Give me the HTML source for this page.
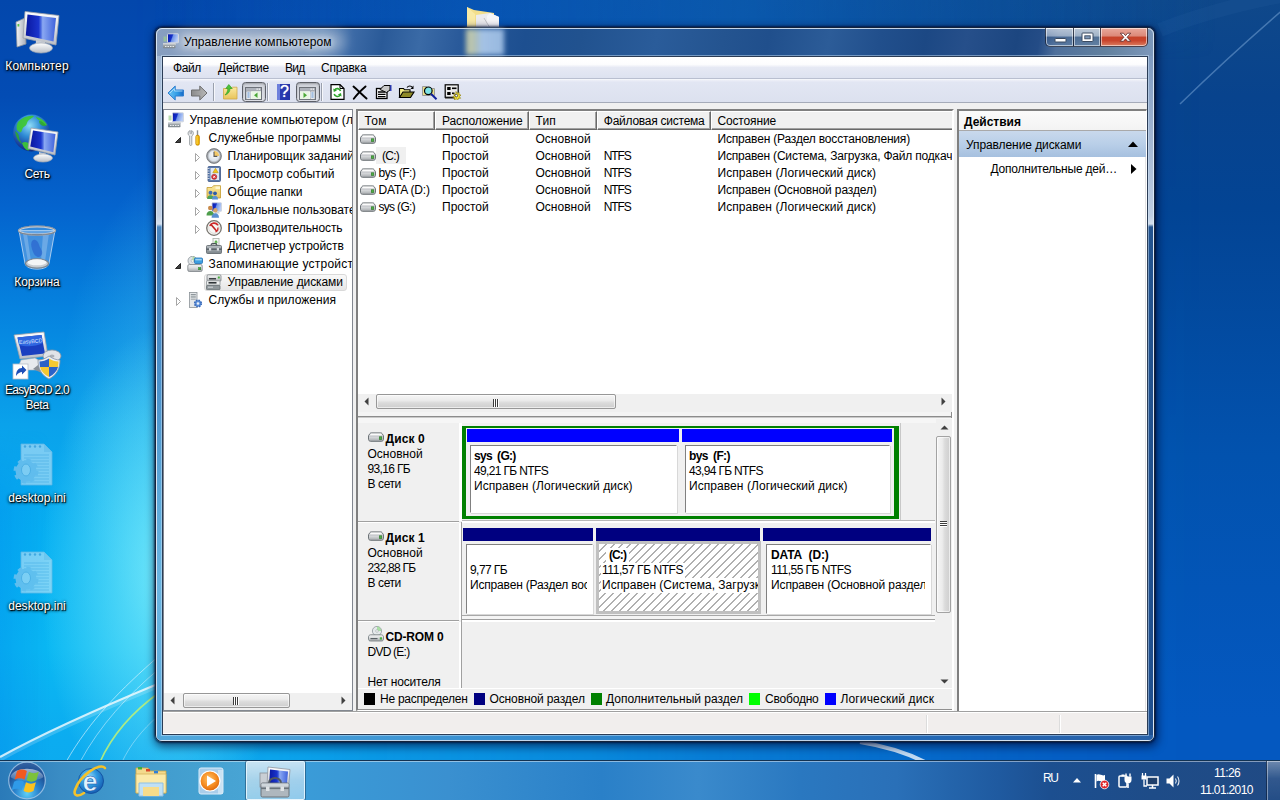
<!DOCTYPE html>
<html lang="ru">
<head>
<meta charset="utf-8">
<title>Управление компьютером</title>
<style>
*{box-sizing:border-box;margin:0;padding:0}
html,body{width:1280px;height:800px;overflow:hidden}
body{position:relative;font-family:"Liberation Sans",sans-serif;font-size:12px;color:#000;background:#0d52a8}
.a{position:absolute}
.t{position:absolute;white-space:nowrap;line-height:14px;height:14px}
#wall{left:0;top:0;width:1280px;height:800px;background:linear-gradient(180deg,rgb(15,72,138) 0%,rgb(8,67,141) 12%,rgb(3,68,148) 26%,rgb(2,82,174) 57%,rgb(4,88,192) 90%,rgb(4,88,192) 100%)}
#wl{left:0;top:0;width:1280px;height:800px;
 background:linear-gradient(180deg,rgb(3,71,172) 0%,rgb(3,76,180) 12%,rgb(4,100,206) 26%,rgb(5,131,223) 39%,rgb(10,162,235) 53%,rgb(7,176,242) 67%,rgb(10,184,243) 81%,rgb(12,172,240) 92.5%,rgb(12,170,238) 100%);
 -webkit-mask-image:linear-gradient(90deg,#000 0%,#000 10%,rgba(0,0,0,.9) 22%,rgba(0,0,0,.74) 31%,rgba(0,0,0,.67) 39%,rgba(0,0,0,.57) 47%,rgba(0,0,0,.45) 55%,rgba(0,0,0,.38) 61%,rgba(0,0,0,.29) 67%,rgba(0,0,0,.12) 78%,rgba(0,0,0,.05) 86%,transparent 94%);
 mask-image:linear-gradient(90deg,#000 0%,#000 10%,rgba(0,0,0,.9) 22%,rgba(0,0,0,.74) 31%,rgba(0,0,0,.67) 39%,rgba(0,0,0,.57) 47%,rgba(0,0,0,.45) 55%,rgba(0,0,0,.38) 61%,rgba(0,0,0,.29) 67%,rgba(0,0,0,.12) 78%,rgba(0,0,0,.05) 86%,transparent 94%)}
#wg{left:0;top:0;width:640px;height:800px;background:radial-gradient(ellipse 130px 250px at 170px 575px,rgba(120,235,250,.95) 0%,rgba(120,235,250,0) 100%),radial-gradient(ellipse 240px 300px at 300px 400px,rgba(120,235,250,.6) 0%,rgba(120,235,250,0) 100%)}
/* window */
#win{left:155px;top:27px;width:1000px;height:715px;border-radius:7px;border:1px solid #15233a;
 background:linear-gradient(100deg,#889fc0 0px,#8199bc 100px,#6a8db8 165px,#3c6aa6 195px,#2a5a98 225px,#3a6aa6 262px,#2a5a9a 300px,#1d4f90 365px,#21528f 420px,#2a5c9a 495px,#245490 560px,#204f8c 605px,#2c5c98 665px,#214f8c 715px,#1c4884 760px,#264f8a 800px,#1c4680 850px,#244c86 872px,#4f709c 890px,#62819f 940px,#7c97ba 985px,#9fb0c9 1000px);
 box-shadow:0 0 2px 1px rgba(0,8,40,.65),1px 3px 8px 2px rgba(0,10,50,.6)}
#win:before{content:"";position:absolute;left:0;top:0;right:0;bottom:0;border-radius:6px;border:1px solid rgba(235,245,255,.8)}
#fl{left:157px;top:56px;width:5px;height:679px;background:linear-gradient(180deg,#a3b8d4 0,#c3d1e5 160px,#d6e1ef 168px,#4b86c0 171px,#417fbc 200px,#4d92cb 330px,#5eaada 450px,#6ab4e0 530px,#62aede 620px,#55a6dc 679px)}
#fr{left:1148px;top:56px;width:5px;height:679px;background:linear-gradient(180deg,#7f9ac0 0,#c0cee2 160px,#d3deec 168px,#23538f 171px,#1f4f8f 100%)}
#fb{left:157px;top:735px;width:996px;height:5px;border-radius:0 0 4px 4px;background:linear-gradient(90deg,#52a8dc 0%,#3f96d4 25%,#2a80c8 50%,#2470bc 65%,#2464b0 85%,#2a62a8 100%)}
#client{left:162px;top:56px;width:986px;height:679px;border:1px solid #2b3c55;background:#fff;box-shadow:0 0 0 1px rgba(215,238,255,.45)}

/* title */
#ttl{left:184px;top:34px;font-size:12px;line-height:16px;height:16px;color:#000;text-shadow:0 0 6px rgba(255,255,255,.85),0 0 9px rgba(255,255,255,.75),0 0 13px rgba(255,255,255,.6)}
#ttlglow{left:176px;top:31px;width:170px;height:22px;border-radius:11px;background:rgba(255,255,255,.3);filter:blur(6px)}
.cb{top:28px;height:19px;border:1px solid rgba(20,30,50,.75);border-top:0;box-shadow:inset 0 0 0 1px rgba(255,255,255,.55)}
#bmin{left:1045px;width:29px;border-radius:0 0 0 5px;background:linear-gradient(180deg,rgba(255,255,255,.6) 0%,rgba(255,255,255,.42) 45%,rgba(60,90,130,.35) 50%,rgba(110,140,175,.3) 100%)}
#bmax{left:1073px;width:28px;border-left:1px solid rgba(20,30,50,.75);background:linear-gradient(180deg,rgba(255,255,255,.6) 0%,rgba(255,255,255,.42) 45%,rgba(60,90,130,.35) 50%,rgba(110,140,175,.3) 100%)}
#bcls{left:1100px;width:48px;border-radius:0 0 5px 0;background:linear-gradient(180deg,#e9a99c 0%,#dc8878 45%,#c6432a 50%,#c9452d 70%,#dc7f62 100%)}
/* client parts */
#menubar{left:163px;top:57px;width:984px;height:22px;background:linear-gradient(180deg,#fff 0%,#fdfdfe 35%,#e6e9f4 50%,#dde2f0 100%);border-bottom:1px solid #b9bfd0}
#toolbar{left:163px;top:79px;width:984px;height:24px;background:linear-gradient(180deg,#eef0f8 0%,#e2e6f3 10%,#dce1ef 100%);border-top:1px solid #f4f6fb;border-bottom:1px solid #a5abb9}
#gap{left:163px;top:103px;width:984px;height:609px;background:#f0f0f0}
.mi{top:61px;font-size:12px}

/* tree */
#tree{left:163px;top:109px;width:190px;height:602px;border:1px solid #828790;background:#fff;overflow:hidden}
#tree .t{font-size:12px}
.ic{position:absolute;width:16px;height:16px;overflow:visible}
.ex{position:absolute;width:9px;height:9px}
#tsel{left:204px;top:274px;width:143px;height:17px;border:1px solid #d9d9d9;border-radius:3px;background:linear-gradient(180deg,#f9f9f9,#e6e6e6)}
.sb{background:#f0f0f0}
.thumb{border:1px solid #979797;border-radius:2px;background:linear-gradient(180deg,#f5f5f5 0%,#ececec 40%,#dbdbdb 60%,#cecece 100%);box-shadow:inset 0 0 0 1px rgba(255,255,255,.6)}
.grip{position:absolute;width:1px;height:8px;background:#3c3c3c;box-shadow:1px 0 0 #fff}

/* center */
#center{left:356px;top:109px;width:598px;height:602px;border-top:2px solid #7f7f7f;border-left:2px solid #7f7f7f;border-right:2px solid #fff;border-bottom:1px solid #fff;background:#fff;overflow:hidden}
#center .t{font-size:12px}
.hd{position:absolute;top:0;height:19px;background:#f0f0f0;border-top:1px solid #fff;border-left:1px solid #fff;border-right:1px solid #696969;border-bottom:1px solid #696969;box-shadow:inset -1px -1px 0 #a0a0a0}
.b{font-weight:bold}
#lower{left:0;top:312px;width:594px;height:286px;background:#f0f0f0}
.pbox{position:absolute;background:#fff;border-top:1px solid #808080;border-left:1px solid #808080;border-right:1px solid #fff;border-bottom:1px solid #fff;box-shadow:1px 1px 0 #d8d8d8}
.lg{position:absolute;top:582px;width:11px;height:12px}

/* actions */
#act{left:957px;top:109px;width:190px;height:602px;border-top:2px solid #7f7f7f;border-left:2px solid #7f7f7f;border-right:1px solid #fff;box-shadow:inset -1px 0 0 #e3e3e3;background:#fff;overflow:hidden}
#act .t{font-size:12px}
#status{left:163px;top:711px;width:984px;height:23px;background:#f1eeed;border-top:1px solid #a0a0a0;box-shadow:inset 0 1px 0 #fff,inset 0 -1px 0 #fff}
.ssep{position:absolute;top:3px;width:1px;height:18px;background:#dcdcdc;box-shadow:1px 0 0 #fff}

/* toolbar icons */
.tsep{position:absolute;top:83px;width:1px;height:18px;background:#9aa0ad;box-shadow:1px 0 0 #f6f7fb}
.tbtn{position:absolute;top:82px;width:24px;height:20px;border:1px solid #5d6068;border-radius:3.500px;background:linear-gradient(180deg,#cfd2da,#dfe1e8);box-shadow:inset 0 1px 2px rgba(0,0,0,.25)}
#q{left:277px;top:84px;width:13px;height:16px;background:linear-gradient(90deg,#6d7fdc 0,#6d7fdc 2.500px,#2a3bb2 3px,#2333a8 100%);color:#fff;font-weight:normal;font-size:16px;line-height:16px;text-align:center;font-family:"Liberation Sans",sans-serif;padding-left:2px;text-shadow:0 0 1px #fff}

/* desktop */
.dl{position:absolute;width:90px;text-align:center;color:#fff;font-size:12px;line-height:15px;white-space:nowrap;text-shadow:1px 1px 1px #000,0 1px 3px rgba(0,0,0,.9),0 0 3px rgba(0,0,0,.7)}
/* taskbar */
#tb{left:0;top:760px;width:1280px;height:40px;border-top:1px solid #123252;box-shadow:inset 0 1px 0 rgba(255,255,255,.45);
 background:linear-gradient(90deg,#2a7ab8 0%,#3a8cc4 4.7%,#3f98cc 9.4%,#44a0d0 15%,#48a4d4 19%,#3a9cd8 23.5%,#3a90d0 35%,#2a80c8 47%,#3a8acc 54.5%,#2a78c0 62.5%,#2a70b8 70%,#2465ac 74%,#1f5aa0 78%,#1c4f90 82%,#1e4c88 90%,#204a84 100%)}
#tbtn{left:246px;top:761px;width:59px;height:39px;border:1px solid rgba(235,248,255,.85);border-radius:2px;background:linear-gradient(180deg,rgba(255,255,255,.7),rgba(255,255,255,.52) 50%,rgba(215,240,252,.55) 100%);box-shadow:0 0 0 1px rgba(20,50,80,.45)}
.tray{position:absolute;color:#fff;font-size:12px;white-space:nowrap;line-height:14px}
#sd{left:1266px;top:761px;width:14px;height:39px;border-left:1px solid rgba(10,30,60,.7);background:linear-gradient(180deg,rgba(255,255,255,.35),rgba(255,255,255,.08) 45%,rgba(255,255,255,.02) 100%);box-shadow:inset 1px 0 0 rgba(255,255,255,.4)}
</style>
</head>
<body>
<svg width="0" height="0" style="position:absolute">
<defs>
<linearGradient id="gScr" x1="0" y1="0" x2="1" y2="0.3"><stop offset="0" stop-color="#0a17a8"/><stop offset=".45" stop-color="#1430c8"/><stop offset=".55" stop-color="#6f93e8"/><stop offset="1" stop-color="#b9cdf6"/></linearGradient>
<linearGradient id="gDrv" x1="0" y1="0" x2="0" y2="1"><stop offset="0" stop-color="#f4f4f4"/><stop offset=".45" stop-color="#dcdee0"/><stop offset="1" stop-color="#a4a8ab"/></linearGradient>
<linearGradient id="gGray" x1="0" y1="0" x2="0" y2="1"><stop offset="0" stop-color="#b9bfc3"/><stop offset="1" stop-color="#7c858b"/></linearGradient>
<linearGradient id="gFold" x1="0" y1="0" x2="0" y2="1"><stop offset="0" stop-color="#fbe9a0"/><stop offset="1" stop-color="#e8c45a"/></linearGradient>
<linearGradient id="gBack" x1="0" y1="0" x2="1" y2="0"><stop offset="0" stop-color="#6fc6f4"/><stop offset=".6" stop-color="#2e9be6"/><stop offset="1" stop-color="#1769c6"/></linearGradient>
<linearGradient id="gFwd" x1="0" y1="0" x2="1" y2="0"><stop offset="0" stop-color="#8a8a8a"/><stop offset="1" stop-color="#b8b8b8"/></linearGradient>
<linearGradient id="gHelp" x1="0" y1="0" x2="1" y2="0"><stop offset="0" stop-color="#5a6fd0"/><stop offset=".5" stop-color="#2a3cb0"/><stop offset="1" stop-color="#1a2a98"/></linearGradient>
<radialGradient id="gClock" cx=".5" cy=".4" r=".6"><stop offset="0" stop-color="#ffffff"/><stop offset="1" stop-color="#d4dde8"/></radialGradient>
<symbol id="i0" viewBox="0 0 16 16">
 <rect x="0.5" y="3.5" width="3" height="5" fill="#9fd08f" opacity=".7"/>
 <path d="M7 9.5h5l1 2.5h-7z" fill="#d9dcdf"/>
 <rect x="4.5" y="0.8" width="11" height="9" rx=".6" fill="url(#gScr)" stroke="#d3d7de" stroke-width="1"/>
 <rect x="0" y="10.2" width="12.5" height="5" rx=".6" fill="url(#gGray)"/>
 <rect x="0" y="10.2" width="12.5" height="1.2" fill="#d6dadd"/>
 <path d="M2 13.5h1.5M4.5 13.5h1.5M7 13.5h1.5M9.5 13.5h1.5" stroke="#e9ecee" stroke-width="1"/>
</symbol>
<symbol id="i1" viewBox="0 0 16 16">
 <path d="M3.2 0.5c-1.6.6-2.4 2-2.1 3.600.2.9.8 1.500 1.500 1.900V14.500c0 .6.5 1 1.100 1s1.100-.4 1.100-1V6c.9-.5 1.500-1.300 1.600-2.400C6.500 2.300 5.800 1.100 4.600.5V3.300L3.900 4 3.200 3.300z" fill="#e8eaec" stroke="#8a9096" stroke-width=".8"/>
 <path d="M10.500 0.300V6" stroke="#8a8f94" stroke-width="1.400"/>
 <rect x="8.800" y="5.200" width="3.600" height="10" rx="1.500" fill="#f0b400" stroke="#c08000" stroke-width=".7"/>
 <rect x="9.500" y="6" width="1" height="8" fill="#ffe070" opacity=".8"/>
</symbol>
<symbol id="i2" viewBox="0 0 16 16">
 <circle cx="8" cy="8" r="7.400" fill="#9a9ea3" stroke="#6d7176" stroke-width=".8"/>
 <circle cx="8" cy="8" r="5.800" fill="url(#gClock)" stroke="#c4c8cd" stroke-width=".8"/>
 <path d="M8 8V2.800A5.200 5.200 0 0 1 13.200 8Z" fill="#f2c868"/><path d="M8 3.800V8.400H11.300" fill="none" stroke="#5a5a5a" stroke-width="1.100"/>
</symbol>
<symbol id="i3" viewBox="0 0 16 16">
 <rect x="2" y=".5" width="12.500" height="15" rx="1" fill="#5d7cad" stroke="#3d5686" stroke-width=".8"/>
 <rect x="4.500" y="2" width="8.500" height="12" fill="#dfe7f3"/>
 <path d="M1 2.500h2.500M1 5h2.500M1 7.500h2.500M1 10h2.500M1 12.500h2.500" stroke="#cfd6e2" stroke-width="1"/>
 <path d="M9.500 2.300l2.700 4.400H6.800z" fill="#f5c518" stroke="#b08a00" stroke-width=".5"/>
 <circle cx="8.200" cy="10.800" r="2.600" fill="#d8343a" stroke="#9a1c22" stroke-width=".5"/>
 <path d="M7.200 9.800l2 2M9.200 9.800l-2 2" stroke="#fff" stroke-width=".9"/>
</symbol>
<symbol id="i4" viewBox="0 0 16 16">
 <path d="M1 3.500h5l1.500-1.800H14.500V14H1z" fill="url(#gFold)" stroke="#c39a2e" stroke-width=".8"/>
 <rect x="9.500" y="2.500" width="4.500" height="2.500" fill="#fff6cf"/>
 <circle cx="4.500" cy="8.800" r="2" fill="#3f6eb5"/>
 <path d="M1.200 15c0-2.600 1.300-3.800 3.300-3.800S7.800 12.400 7.800 15z" fill="#4aa35a"/>
 <circle cx="9" cy="9.300" r="1.900" fill="#2f5da8"/>
 <path d="M6 15.500c0-2.500 1.200-3.700 3-3.700s3 1.200 3 3.700z" fill="#5b93d6"/>
</symbol>
<symbol id="i5" viewBox="0 0 16 16">
 <rect x="6" y=".8" width="9.500" height="8.500" rx=".5" fill="url(#gScr)" stroke="#cfd4dc" stroke-width=".9"/>
 <path d="M9 9.500h4l.8 2h-5.600z" fill="#d0d4d8"/>
 <circle cx="4.300" cy="6" r="2.300" fill="#c98a4a"/>
 <path d="M.5 13.500c0-3 1.500-4.500 3.800-4.500s3.800 1.500 3.800 4.500z" fill="#4e9e4c"/>
 <circle cx="9.300" cy="8.300" r="2.200" fill="#d9a56a"/>
 <path d="M5.600 15.800c0-3 1.500-4.500 3.700-4.500s3.700 1.500 3.700 4.500z" fill="#5a8fd0"/>
</symbol>
<symbol id="i6" viewBox="0 0 16 16">
 <circle cx="8" cy="8" r="7.300" fill="#f7f7f5" stroke="#77746e" stroke-width="1.300"/>
 <circle cx="8" cy="8" r="5.300" fill="none" stroke="#d8d6d0" stroke-width=".8"/>
 <path d="M3.800 5.800A4.800 4.800 0 0 1 12 5.200" fill="none" stroke="#d02a2a" stroke-width="1.700"/>
 <path d="M5 4.500L11 11.500" stroke="#c01f1f" stroke-width="1.600"/>
 <path d="M11.800 7.500A4 4 0 0 1 9.500 12" fill="none" stroke="#d02a2a" stroke-width="1.300"/>
</symbol>
<symbol id="i7" viewBox="0 0 16 16">
 <rect x="7" y=".5" width="6" height="7" fill="#f4f6f4" stroke="#a9b0a9" stroke-width=".8"/>
 <path d="M10 2l2 2.500h-1.300V6.500h-1.400V4.500H8z" fill="#59b04a"/>
 <path d="M5 7.500c0-1 .8-1.800 1.800-1.800h2.400c1 0 1.800.8 1.800 1.800" fill="none" stroke="#4a5056" stroke-width="1.200"/>
 <rect x=".5" y="7.500" width="15" height="8" rx="1" fill="url(#gGray)" stroke="#5a6268" stroke-width=".8"/>
 <rect x=".5" y="10.500" width="15" height="1.300" fill="#4e565c"/>
 <rect x="3" y="10" width="2.200" height="2.600" fill="#d9dde0"/><rect x="10.800" y="10" width="2.200" height="2.600" fill="#d9dde0"/>
</symbol>
<symbol id="i8" viewBox="0 0 16 16">
 <circle cx="5.500" cy="4.800" r="4.500" fill="#dfe3e6" stroke="#8f979d" stroke-width=".8"/>
 <circle cx="5.500" cy="4.800" r="1.400" fill="#fff" stroke="#9aa2a8" stroke-width=".6"/>
 <path d="M5.500 .5A4.300 4.300 0 0 1 9.500 3.500L5.500 4.800z" fill="#a8d89a" opacity=".8"/>
 <rect x="7.500" y="2" width="8" height="5.500" rx="1" fill="#3d9fe0" stroke="#1f6fb5" stroke-width=".8"/>
 <rect x="8.300" y="2.800" width="6.400" height="1.600" fill="#9fd4f5"/>
 <rect x=".8" y="8.500" width="14.400" height="7" rx="1.500" fill="url(#gDrv)" stroke="#7d8488" stroke-width=".8"/>
 <rect x="11.500" y="11.500" width="2.300" height="2.300" fill="#3fa83a" stroke="#2a7a28" stroke-width=".4"/>
</symbol>
<symbol id="i9" viewBox="0 0 16 16">
 <rect x="1" y=".8" width="14" height="6.500" rx="1.200" fill="url(#gDrv)" stroke="#7d8488" stroke-width=".8"/>
 <rect x="11.800" y="2.500" width="2" height="2" fill="#46ad3f"/>
 <rect x="3" y="4" width="7" height="1.500" fill="#3c4246"/>
 <rect x=".5" y="6.800" width="13.500" height="4.500" rx=".8" fill="#eef0f0" stroke="#8b9296" stroke-width=".8"/>
 <rect x="2.500" y="8" width="8" height="1.600" fill="#2e3438"/>
 <rect x=".5" y="11.300" width="13.500" height="4.400" rx=".8" fill="#8f979b" stroke="#666e72" stroke-width=".8"/>
 <rect x="2" y="12.600" width="5" height="1.200" fill="#c9ced1"/>
</symbol>
<symbol id="i10" viewBox="0 0 16 16">
 <rect x="2.500" y=".5" width="7.500" height="15" fill="#e4e7e9" stroke="#8a9297" stroke-width=".8"/>
 <rect x="3.800" y="2" width="5" height="1.300" fill="#8f979c"/><rect x="3.800" y="4.300" width="5" height="1.300" fill="#8f979c"/><rect x="3.800" y="6.600" width="5" height="1.300" fill="#aab1b5"/>
 <circle cx="11" cy="11.500" r="3.300" fill="#5b8fd8" stroke="#3a6ab8" stroke-width="1.600" stroke-dasharray="1.500 1.100"/>
 <circle cx="11" cy="11.500" r="1.300" fill="#eaf1fb"/>
</symbol>
<symbol id="drv" viewBox="0 0 16 10">
 <path d="M3.200 .9h9.600c.5 0 .9.200 1.200.6l1.500 2.200v3.600c0 1.100-.9 2-2 2H2.500c-1.100 0-2-.9-2-2V3.700L2 1.500c.3-.4.700-.6 1.200-.6z" fill="url(#gDrv)" stroke="#6d7377" stroke-width="1"/>
 <path d="M3.300 1.700h9.400l1.400 2H1.900z" fill="#fbfbfb"/>
 <path d="M1 4h14" stroke="#9aa0a4" stroke-width=".6"/>
 <rect x="11.300" y="4.800" width="2.500" height="2.700" fill="#4cb043" stroke="#2a7226" stroke-width=".6"/>
</symbol>

<linearGradient id="gScr2" x1="0" y1="0" x2="1" y2="0"><stop offset="0" stop-color="#0a18a0"/><stop offset=".42" stop-color="#1a34cc"/><stop offset=".5" stop-color="#4a6ae0"/><stop offset=".56" stop-color="#8aa8f2"/><stop offset="1" stop-color="#3f62dc"/></linearGradient>
<linearGradient id="gSil" x1="0" y1="0" x2="0" y2="1"><stop offset="0" stop-color="#ffffff"/><stop offset="1" stop-color="#b9bec6"/></linearGradient>
<linearGradient id="gSilH" x1="0" y1="0" x2="1" y2="0"><stop offset="0" stop-color="#f4f5f7"/><stop offset="1" stop-color="#a8aeb8"/></linearGradient>
<radialGradient id="gGlobe" cx=".45" cy=".3" r=".75"><stop offset="0" stop-color="#8fdcf6"/><stop offset=".4" stop-color="#2f8cd6"/><stop offset=".8" stop-color="#173c98"/><stop offset="1" stop-color="#0e2670"/></radialGradient>
<radialGradient id="gOrb" cx=".5" cy=".85" r=".9"><stop offset="0" stop-color="#5fd0f8"/><stop offset=".35" stop-color="#2a86d0"/><stop offset=".7" stop-color="#1d4f94"/><stop offset="1" stop-color="#3a6aa8"/></radialGradient>
<linearGradient id="gOrbHi" x1="0" y1="0" x2="0" y2="1"><stop offset="0" stop-color="#fff" stop-opacity=".85"/><stop offset="1" stop-color="#fff" stop-opacity=".15"/></linearGradient>
<radialGradient id="gIE" cx=".4" cy=".35" r=".75"><stop offset="0" stop-color="#9fe0fb"/><stop offset=".45" stop-color="#2f9ae0"/><stop offset="1" stop-color="#0f4fa8"/></radialGradient>
<radialGradient id="gWmp" cx=".45" cy=".4" r=".65"><stop offset="0" stop-color="#ffc266"/><stop offset=".6" stop-color="#f58a1f"/><stop offset="1" stop-color="#d8600a"/></radialGradient>
<symbol id="cdr" viewBox="0 0 16 16">
 <circle cx="9" cy="5" r="4.600" fill="#e4e8ea" stroke="#8f979d" stroke-width=".8"/>
 <path d="M9 .6A4.400 4.400 0 0 1 13.400 5L9 5z" fill="#9fdc98" opacity=".85"/>
 <circle cx="9" cy="5" r="1.300" fill="#fff" stroke="#9aa2a8" stroke-width=".6"/>
 <path d="M2.500 8.800h11c1 0 2 1 2 2v2.400c0 1-.8 1.800-1.800 1.800H2.300c-1 0-1.800-.8-1.800-1.800v-2.400c0-1 1-2 2-2z" fill="url(#gDrv)" stroke="#7b8286" stroke-width=".9"/>
 <rect x="2.500" y="12" width="7" height="1.200" fill="#5a6166"/>
 <rect x="11.800" y="11.300" width="2.200" height="2.300" fill="#4cb043"/>
</symbol>
<symbol id="mon" viewBox="0 0 48 48">
 <path d="M4 12l9-4 1 26-9 3z" fill="url(#gSilH)" stroke="#8d939c" stroke-width=".8"/>
 <rect x="5.500" y="14" width="1.800" height="2.500" fill="#59c24a"/>
 <path d="M13 1.500L47 5.500 44 35 11 28z" fill="url(#gSil)" stroke="#9aa0aa" stroke-width=".8"/>
 <path d="M15.500 4.500L44 8 41.500 31.500 13.800 25.500z" fill="url(#gScr2)"/>
 <path d="M24 30l9 2-.5 5h-9z" fill="#c9ced6"/>
 <ellipse cx="29" cy="38" rx="11.500" ry="5" fill="url(#gSil)" stroke="#a7adb6" stroke-width=".7"/>
</symbol>
</defs>
</svg>
<div id="wall" class="a"></div><div id="wl" class="a"></div><div id="wg" class="a"></div><div class="a" style="left:0;top:0;width:1280px;height:60px;background:linear-gradient(90deg,transparent 12%,rgba(8,100,200,.45) 36%,rgba(12,100,185,.6) 58%,rgba(10,90,170,.4) 78%,transparent 95%);-webkit-mask-image:linear-gradient(180deg,#000 40%,transparent);mask-image:linear-gradient(180deg,#000 40%,transparent)"></div><div class="a" style="left:0;top:430px;width:50px;height:330px;background:linear-gradient(90deg,rgba(0,140,236,.4),rgba(0,140,236,0));-webkit-mask-image:linear-gradient(180deg,transparent,#000 25%);mask-image:linear-gradient(180deg,transparent,#000 25%)"></div>
<svg class="a" style="left:0;top:0;width:1280px;height:800px" viewBox="0 0 1280 800" fill="none">
<path d="M0 757C40 735 90 712 160 683" stroke="#fff" stroke-width="2.200" opacity=".75"/>
<path d="M0 759C40 737 90 714 160 685" stroke="#fff" stroke-width="5" opacity=".18"/>
<path d="M66 762C90 720 120 690 160 655" stroke="#e8f8ff" stroke-width="1" opacity=".6"/>
<path d="M80 762C100 725 128 695 160 668" stroke="#e8f8ff" stroke-width="1" opacity=".5"/>
<path d="M100 762C112 735 132 712 160 692" stroke="#b8f07a" stroke-width="1.600" opacity=".9"/>
<path d="M122 762C130 745 142 730 158 716" stroke="#e8f8ff" stroke-width="1" opacity=".4"/>
<path d="M860 742C885 746 905 752 925 762" stroke="#fff" stroke-width="4" opacity=".75"/>
<path d="M1180 104C1215 70 1250 38 1285 8" stroke="#9cc4ee" stroke-width="1.500" opacity=".4"/><path d="M1160 30C1200 14 1240 4 1280 -4" stroke="#5a90c8" stroke-width="14" opacity=".07"/>
</svg>
<div class="dl" style="left:-8px;top:59px;letter-spacing:0.155px">Компьютер</div>
<div class="dl" style="left:-8px;top:167px;letter-spacing:-0.426px">Сеть</div>
<div class="dl" style="left:-8px;top:275px;letter-spacing:-0.031px">Корзина</div>
<div class="dl" style="left:-8px;top:383px;letter-spacing:-0.730px">EasyBCD 2.0</div>
<div class="dl" style="left:-8px;top:398px;letter-spacing:-0.422px">Beta</div>
<div class="dl" style="left:-8px;top:491px;letter-spacing:0.011px">desktop.ini</div>
<div class="dl" style="left:-8px;top:599px;letter-spacing:0.011px">desktop.ini</div>
<svg class="a" style="left:12px;top:9.500px;width:48px;height:46px" viewBox="0 0 48 46"><use href="#mon" width="48" height="48"/></svg>
<svg class="a" style="left:12px;top:113px;width:48px;height:50px" viewBox="0 0 48 50"><circle cx="19.500" cy="20" r="18.500" fill="url(#gGlobe)"/><path d="M6 9c5-5 11-7 16-6-2 3-6 3-7 7s-4 3-5 7-3 2-5 0c-1-3 0-6 1-8zM10 30c3-2 6-1 8 2s0 5-2 5.500c-3-1-5-4-6-7.500zM24 4c5 1 9 4 11 8-3 1-5-1-6-3s-4-2-5-5z" fill="#3fc832" opacity=".92"/><path d="M3 18c2 1 4 3 4 6s2 4 3 7c-3-2-6-6-7-13zM27 8c3 0 6 2 7 5-2 0-4 0-5-1s-2-2-2-4z" fill="#2fa82a" opacity=".85"/><path d="M19 15L46 19 43 42 16 35.500z" fill="url(#gSil)" stroke="#9aa0aa" stroke-width=".8"/><path d="M21 17.500L43.500 21 41.300 39.300 18.300 33.500z" fill="url(#gScr2)"/><path d="M27 39l7 1.500v3h-7z" fill="#c9ced6"/><ellipse cx="31" cy="45" rx="9.500" ry="4" fill="url(#gSil)" stroke="#a7adb6" stroke-width=".7"/></svg>
<svg class="a" style="left:16px;top:223.500px;width:42px;height:47px" viewBox="0 0 42 50" preserveAspectRatio="none"><path d="M3 7L9 42c1 4 6 6 12 6s11-2 12-6L39 7z" fill="#7fb4ea" fill-opacity=".5" stroke="#d8e8f8" stroke-opacity=".75" stroke-width="1"/><path d="M7 10l5 30h3L11 10zM27 10l-2 30h4l4-30z" fill="#fff" opacity=".22"/><path d="M16 18c3-3 6 0 7 4s4 6 3 10-6 4-8 0c-2-5-4-10-2-14z" fill="#2558c8" opacity=".55"/><ellipse cx="21" cy="42" rx="11.500" ry="5" fill="#c9cdd2" stroke="#7e868e" stroke-width="1.200"/><ellipse cx="21" cy="40.800" rx="9.500" ry="3.200" fill="#f4f5f6"/><ellipse cx="21" cy="7" rx="18" ry="4.300" fill="#9fd0f5" fill-opacity=".3" stroke="#c4ccd6" stroke-width="2.200"/><ellipse cx="21" cy="7" rx="18.800" ry="5" fill="none" stroke="#68727e" stroke-width=".7"/><path d="M3.500 9c4 3 31 3 35 0" stroke="#7a8492" stroke-width="1" fill="none"/></svg>
<svg class="a" style="left:11px;top:329px;width:52px;height:52px" viewBox="0 0 52 52"><path d="M3 6L33 3 37 27 9 30z" fill="url(#gSil)" stroke="#9aa0aa" stroke-width=".8"/><path d="M6.500 8.500L30.500 6 34 24.500 11 27z" fill="#1a3fc0"/><path d="M6.500 8.500L30.500 6 32 14c-8 4-17 4-24 2z" fill="#2f66e0"/><text x="8" y="15" font-family="Liberation Sans,sans-serif" font-size="5.500" fill="#d8e8ff" transform="rotate(-4 8 15)">EasyBCD</text><path d="M10 31l14-2 10 6-4 6H6z" fill="#e8eaee" stroke="#aab0b8" stroke-width=".6"/><ellipse cx="41" cy="27" rx="9" ry="6" fill="#e0e3e8" stroke="#9097a0" stroke-width=".8"/><ellipse cx="41" cy="27" rx="2.500" ry="1.600" fill="#aab0b8"/><path d="M22 40l10-8 8 5-7 8z" fill="#8a9098"/><path d="M38 27c4 3 8 4 11 4 0 8-3 15-11 19-8-4-11-11-11-19 3 0 7-1 11-4z" fill="#e9eef5" stroke="#8a93a0" stroke-width=".8"/><path d="M38 29.500V38H29c-.3-2-.5-4-.5-5.500 3 0 6.500-1 9.500-3z" fill="#2a62c8"/><path d="M38 29.500c3 2 6 3 9.500 3 0 1.500-.2 3.500-.5 5.500H38z" fill="#f5c832"/><path d="M29 38h9v10c-5-2.500-8-6-9-10z" fill="#f5c832"/><path d="M38 38h9c-1 4-4 7.500-9 10z" fill="#2a62c8"/><rect x="2" y="35" width="15" height="15" fill="#fff" stroke="#b8bec8" stroke-width=".8"/><path d="M5 47c0-5 2-8 6-8V36.500l4.500 4.500L11 45.500V43c-2 0-4 1-6 4z" fill="#1f4fb8"/></svg>
<svg class="a" style="left:12px;top:443px;width:44px;height:46px;opacity:.55" viewBox="0 0 44 46"><path d="M9 1H32L40 9V42H9z" fill="#d6ecfa" stroke="#9fc4e0" stroke-width=".8"/><path d="M32 1V9H40z" fill="#b9d9f0"/><path d="M12 12h25M12 15h25M12 18h25M12 21h25M12 24h25M12 27h25M12 30h25M12 33h25M12 36h25M12 39h25" stroke="#9cc8e8" stroke-width="1"/><circle cx="13" cy="3.500" r="1.200" fill="#6fa8d8"/><circle cx="18" cy="3.500" r="1.200" fill="#6fa8d8"/><circle cx="23" cy="3.500" r="1.200" fill="#6fa8d8"/><circle cx="28" cy="3.500" r="1.200" fill="#6fa8d8"/><circle cx="14" cy="28" r="10" fill="#a9d0ee" stroke="#a9d0ee" stroke-width="5" stroke-dasharray="4 3.850"/><circle cx="14" cy="28" r="10.500" fill="#a9d0ee"/><ellipse cx="14" cy="27" rx="4.500" ry="6" fill="#dcedf9" stroke="#86b8de" stroke-width="1"/></svg>
<svg class="a" style="left:12px;top:551px;width:44px;height:46px;opacity:.55" viewBox="0 0 44 46"><path d="M9 1H32L40 9V42H9z" fill="#d6ecfa" stroke="#9fc4e0" stroke-width=".8"/><path d="M32 1V9H40z" fill="#b9d9f0"/><path d="M12 12h25M12 15h25M12 18h25M12 21h25M12 24h25M12 27h25M12 30h25M12 33h25M12 36h25M12 39h25" stroke="#9cc8e8" stroke-width="1"/><circle cx="13" cy="3.500" r="1.200" fill="#6fa8d8"/><circle cx="18" cy="3.500" r="1.200" fill="#6fa8d8"/><circle cx="23" cy="3.500" r="1.200" fill="#6fa8d8"/><circle cx="28" cy="3.500" r="1.200" fill="#6fa8d8"/><circle cx="14" cy="28" r="10" fill="#a9d0ee" stroke="#a9d0ee" stroke-width="5" stroke-dasharray="4 3.850"/><circle cx="14" cy="28" r="10.500" fill="#a9d0ee"/><ellipse cx="14" cy="27" rx="4.500" ry="6" fill="#dcedf9" stroke="#86b8de" stroke-width="1"/></svg>
<svg class="a" style="left:466px;top:6px;width:36px;height:22px" viewBox="0 0 36 22"><path d="M1 1L8 4 28 7V22H1z" fill="#f3df8c"/><path d="M1 1L9 8V22H1z" fill="#f8eaa6"/><path d="M10 9L24 7 33 11V22H10z" fill="#ececee"/><path d="M21 10L24 7 33 11V22H21z" fill="#f6f6f8"/><path d="M18 12l6 10" stroke="#b8b8bc" stroke-width=".8"/></svg>
<div id="win" class="a"></div>
<div id="fl" class="a"></div><div id="fr" class="a"></div><div id="fb" class="a"></div>
<div id="client" class="a"></div>
<div class="a" style="left:466px;top:29px;width:38px;height:26px;filter:blur(2.500px);background:linear-gradient(90deg,rgba(225,222,170,.85) 0,rgba(210,218,190,.8) 25%,rgba(178,206,238,.9) 40%,rgba(172,202,236,.85) 100%)"></div>
<div id="ttlglow" class="a"></div>
<span id="ttl" class="t" style="letter-spacing:0.096px">Управление компьютером</span>
<div id="bmin" class="a cb"></div><div id="bmax" class="a cb"></div><div id="bcls" class="a cb"></div>
<div id="menubar" class="a"></div>
<span class="t mi" style="left:173px;letter-spacing:-0.379px">Файл</span>
<span class="t mi" style="left:218px;letter-spacing:-0.221px">Действие</span>
<span class="t mi" style="left:285px;letter-spacing:-0.773px">Вид</span>
<span class="t mi" style="left:321px;letter-spacing:-0.254px">Справка</span>
<div id="toolbar" class="a"></div>
<div id="gap" class="a"></div>
<div id="tree" class="a">
<div id="tsel" class="a" style="left:40px;top:164px"></div>
<svg class="ic" style="left:4px;top:2px" viewBox="0 0 16 16"><use href="#i0"/></svg>
<span class="t" style="left:25.5px;top:3px;letter-spacing:0.155px">Управление компьютером (локальным)</span>
<svg class="ex" style="left:10px;top:25.5px" viewBox="0 0 9 9"><path d="M6.5 1.5V6.5H1.5Z" fill="#404040" stroke="#262626" stroke-width="1" stroke-linejoin="round"/></svg>
<svg class="ic" style="left:23px;top:20px" viewBox="0 0 16 16"><use href="#i1"/></svg>
<span class="t" style="left:44.5px;top:21px;letter-spacing:0.068px">Служебные программы</span>
<svg class="ex" style="left:30px;top:42.5px" viewBox="0 0 9 9"><path d="M1.5 0.5V8.5L5.5 4.5Z" fill="#fff" stroke="#a6a6a6" stroke-width="1" stroke-linejoin="round"/></svg>
<svg class="ic" style="left:42px;top:38px" viewBox="0 0 16 16"><use href="#i2"/></svg>
<span class="t" style="left:63.5px;top:39px">Планировщик заданий</span>
<svg class="ex" style="left:30px;top:60.5px" viewBox="0 0 9 9"><path d="M1.5 0.5V8.5L5.5 4.5Z" fill="#fff" stroke="#a6a6a6" stroke-width="1" stroke-linejoin="round"/></svg>
<svg class="ic" style="left:42px;top:56px" viewBox="0 0 16 16"><use href="#i3"/></svg>
<span class="t" style="left:63.5px;top:57px;letter-spacing:0.103px">Просмотр событий</span>
<svg class="ex" style="left:30px;top:78.5px" viewBox="0 0 9 9"><path d="M1.5 0.5V8.5L5.5 4.5Z" fill="#fff" stroke="#a6a6a6" stroke-width="1" stroke-linejoin="round"/></svg>
<svg class="ic" style="left:42px;top:74px" viewBox="0 0 16 16"><use href="#i4"/></svg>
<span class="t" style="left:63.5px;top:75px;letter-spacing:0.053px">Общие папки</span>
<svg class="ex" style="left:30px;top:96.5px" viewBox="0 0 9 9"><path d="M1.5 0.5V8.5L5.5 4.5Z" fill="#fff" stroke="#a6a6a6" stroke-width="1" stroke-linejoin="round"/></svg>
<svg class="ic" style="left:42px;top:92px" viewBox="0 0 16 16"><use href="#i5"/></svg>
<span class="t" style="left:63.5px;top:93px">Локальные пользователи</span>
<svg class="ex" style="left:30px;top:114.5px" viewBox="0 0 9 9"><path d="M1.5 0.5V8.5L5.5 4.5Z" fill="#fff" stroke="#a6a6a6" stroke-width="1" stroke-linejoin="round"/></svg>
<svg class="ic" style="left:42px;top:110px" viewBox="0 0 16 16"><use href="#i6"/></svg>
<span class="t" style="left:63.5px;top:111px;letter-spacing:-0.082px">Производительность</span>
<svg class="ic" style="left:42px;top:128px" viewBox="0 0 16 16"><use href="#i7"/></svg>
<span class="t" style="left:63.5px;top:129px;letter-spacing:-0.057px">Диспетчер устройств</span>
<svg class="ex" style="left:10px;top:151.5px" viewBox="0 0 9 9"><path d="M6.5 1.5V6.5H1.5Z" fill="#404040" stroke="#262626" stroke-width="1" stroke-linejoin="round"/></svg>
<svg class="ic" style="left:23px;top:146px" viewBox="0 0 16 16"><use href="#i8"/></svg>
<span class="t" style="left:44.5px;top:147px;letter-spacing:0.232px">Запоминающие устройства</span>
<svg class="ic" style="left:42px;top:164px" viewBox="0 0 16 16"><use href="#i9"/></svg>
<span class="t" style="left:63.5px;top:165px;letter-spacing:-0.083px">Управление дисками</span>
<svg class="ex" style="left:11px;top:186.5px" viewBox="0 0 9 9"><path d="M1.5 0.5V8.5L5.5 4.5Z" fill="#fff" stroke="#a6a6a6" stroke-width="1" stroke-linejoin="round"/></svg>
<svg class="ic" style="left:23px;top:182px" viewBox="0 0 16 16"><use href="#i10"/></svg>
<span class="t" style="left:44.5px;top:183px;letter-spacing:0.030px">Службы и приложения</span>
<div class="a sb" style="left:0;top:583px;width:188px;height:17px"></div>
<div class="a thumb" style="left:19px;top:583px;width:107px;height:15px"><i class="grip" style="left:49px;top:3px"></i><i class="grip" style="left:51px;top:3px"></i><i class="grip" style="left:53px;top:3px"></i></div>
<svg class="a" style="left:6px;top:586px;width:5px;height:9px" viewBox="0 0 5 9"><path d="M4.5 0.5V8.5L0.5 4.5Z" fill="#404040"/></svg>
<svg class="a" style="left:177px;top:586px;width:5px;height:9px" viewBox="0 0 5 9"><path d="M0.5 0.5V8.5L4.5 4.5Z" fill="#404040"/></svg>
</div>
<div id="center" class="a">
<div class="hd" style="left:0px;width:77px"></div>
<span class="t" style="left:6.5px;top:3px;letter-spacing:0.324px">Том</span>
<div class="hd" style="left:77px;width:94px"></div>
<span class="t" style="left:84px;top:3px;letter-spacing:-0.090px">Расположение</span>
<div class="hd" style="left:171px;width:68px"></div>
<span class="t" style="left:177.5px;top:3px;letter-spacing:0.161px">Тип</span>
<div class="hd" style="left:239px;width:114px"></div>
<span class="t" style="left:245.75px;top:3px;letter-spacing:-0.248px">Файловая система</span>
<div class="hd" style="left:353px;width:290px"></div>
<span class="t" style="left:359.5px;top:3px;letter-spacing:-0.155px">Состояние</span>
<svg class="a" style="left:2px;top:23px;width:16px;height:10px" viewBox="0 0 16 10"><use href="#drv"/></svg>
<span class="t" style="left:84px;top:21px">Простой</span>
<span class="t" style="left:177.5px;top:21px;letter-spacing:0.011px">Основной</span>
<span class="t" style="left:359.5px;top:21px;letter-spacing:-0.178px">Исправен (Раздел восстановления)</span>
<div class="a" style="left:18px;top:36px;width:30px;height:17px;background:#f0f0f0"></div>
<svg class="a" style="left:2px;top:40px;width:16px;height:10px" viewBox="0 0 16 10"><use href="#drv"/></svg>
<span class="t" style="left:24px;top:38px;letter-spacing:-0.750px">(C:)</span>
<span class="t" style="left:84px;top:38px">Простой</span>
<span class="t" style="left:177.5px;top:38px;letter-spacing:0.011px">Основной</span>
<span class="t" style="left:245.75px;top:38px;letter-spacing:-1.086px">NTFS</span>
<span class="t" style="left:359.5px;top:38px;letter-spacing:-0.194px">Исправен (Система, Загрузка, Файл подкачки, Активен, Аварийный дамп памяти, Основной раздел)</span>
<svg class="a" style="left:2px;top:57px;width:16px;height:10px" viewBox="0 0 16 10"><use href="#drv"/></svg>
<span class="t" style="left:20.5px;top:55px;letter-spacing:-0.459px">bys (F:)</span>
<span class="t" style="left:84px;top:55px">Простой</span>
<span class="t" style="left:177.5px;top:55px;letter-spacing:0.011px">Основной</span>
<span class="t" style="left:245.75px;top:55px;letter-spacing:-1.086px">NTFS</span>
<span class="t" style="left:359.5px;top:55px;letter-spacing:0.064px">Исправен (Логический диск)</span>
<svg class="a" style="left:2px;top:74px;width:16px;height:10px" viewBox="0 0 16 10"><use href="#drv"/></svg>
<span class="t" style="left:20.5px;top:72px;letter-spacing:-0.188px">DATA (D:)</span>
<span class="t" style="left:84px;top:72px">Простой</span>
<span class="t" style="left:177.5px;top:72px;letter-spacing:0.011px">Основной</span>
<span class="t" style="left:245.75px;top:72px;letter-spacing:-1.086px">NTFS</span>
<span class="t" style="left:359.5px;top:72px;letter-spacing:-0.124px">Исправен (Основной раздел)</span>
<svg class="a" style="left:2px;top:91px;width:16px;height:10px" viewBox="0 0 16 10"><use href="#drv"/></svg>
<span class="t" style="left:20.5px;top:89px;letter-spacing:-0.688px">sys (G:)</span>
<span class="t" style="left:84px;top:89px">Простой</span>
<span class="t" style="left:177.5px;top:89px;letter-spacing:0.011px">Основной</span>
<span class="t" style="left:245.75px;top:89px;letter-spacing:-1.086px">NTFS</span>
<span class="t" style="left:359.5px;top:89px;letter-spacing:0.064px">Исправен (Логический диск)</span>
<div class="a sb" style="left:0;top:283px;width:594px;height:18px"></div>
<div class="a thumb" style="left:18px;top:283px;width:240px;height:15px"><i class="grip" style="left:116px;top:4px"></i><i class="grip" style="left:118px;top:4px"></i><i class="grip" style="left:120px;top:4px"></i></div>
<svg class="a" style="left:6px;top:286px;width:5px;height:9px" viewBox="0 0 5 9"><path d="M4.5 0.5V8.5L0.5 4.5Z" fill="#404040"/></svg>
<svg class="a" style="left:583px;top:286px;width:5px;height:9px" viewBox="0 0 5 9"><path d="M0.5 0.5V8.5L4.5 4.5Z" fill="#404040"/></svg>
<div class="a" style="left:0;top:301px;width:594px;height:5px;background:#f4f4f4"></div>
<div class="a" style="left:0;top:305px;width:594px;height:2px;background:#8c8c8c;border-bottom:1px solid #c9c9c9"></div><div class="a" style="left:593px;top:301px;width:1px;height:6px;background:#8c8c8c"></div>
<div class="a" style="left:0;top:307px;width:594px;height:5px;background:#f6f6f6"></div>
<div class="a" style="left:0;top:312px;width:594px;height:286px;background:#f0f0f0"></div>
<svg class="a" style="left:10px;top:321px;width:16px;height:10px" viewBox="0 0 16 10"><use href="#drv"/></svg>
<span class="t b" style="left:27.5px;top:321px;letter-spacing:0.129px">Диск 0</span>
<span class="t" style="left:9.5px;top:336px;letter-spacing:0.011px">Основной</span>
<span class="t" style="left:9.5px;top:351px;letter-spacing:-0.656px">93,16 ГБ</span>
<span class="t" style="left:9.5px;top:366px;letter-spacing:-0.402px">В сети</span>
<div class="a" style="left:101px;top:312px;width:3px;height:98px;background:#fff"></div>
<div class="a" style="left:104px;top:315px;width:437px;height:93px;border:solid #008000;border-width:2px 5px 3px 4px;background:#f0f0f0"></div>
<div class="a" style="left:542px;top:312px;width:1px;height:98px;background:#c8c8c8"></div>
<div class="a" style="left:109px;top:318px;width:212px;height:13px;background:#0000ff"></div>
<div class="pbox" style="left:112px;top:334px;width:207px;height:68px"></div>
<span class="t b" style="left:116px;top:338px;letter-spacing:-0.713px">sys&nbsp; (G:)</span>
<span class="t" style="left:116px;top:353px;letter-spacing:-0.647px">49,21 ГБ NTFS</span>
<span class="t" style="left:116px;top:368px;letter-spacing:0.064px">Исправен (Логический диск)</span>
<div class="a" style="left:324px;top:318px;width:210px;height:13px;background:#0000ff"></div>
<div class="pbox" style="left:327px;top:334px;width:205px;height:68px"></div>
<span class="t b" style="left:331px;top:338px;letter-spacing:-0.652px">bys&nbsp; (F:)</span>
<span class="t" style="left:331px;top:353px;letter-spacing:-0.662px">43,94 ГБ NTFS</span>
<span class="t" style="left:331px;top:368px;letter-spacing:0.064px">Исправен (Логический диск)</span>
<div class="a" style="left:0;top:410px;width:101px;height:1px;background:#a0a0a0"></div><div class="a" style="left:0;top:411px;width:101px;height:1px;background:#fff"></div><div class="a" style="left:104px;top:409px;width:473px;height:1px;background:#b8b8b8"></div><div class="a" style="left:104px;top:410px;width:473px;height:2px;background:#fff"></div>
<svg class="a" style="left:10px;top:420px;width:16px;height:10px" viewBox="0 0 16 10"><use href="#drv"/></svg>
<span class="t b" style="left:27.5px;top:420px;letter-spacing:0.129px">Диск 1</span>
<span class="t" style="left:9.5px;top:435px;letter-spacing:0.011px">Основной</span>
<span class="t" style="left:9.5px;top:450px;letter-spacing:-0.714px">232,88 ГБ</span>
<span class="t" style="left:9.5px;top:465px;letter-spacing:-0.402px">В сети</span>
<div class="a" style="left:101px;top:412px;width:2px;height:97px;background:#fff"></div><div class="a" style="left:103px;top:411px;width:1px;height:98px;background:#a0a0a0"></div>
<div class="a" style="left:105px;top:417px;width:130px;height:13px;background:#000080"></div>
<div class="pbox" style="left:108px;top:433px;width:127px;height:70px;overflow:hidden"><div class="a" style="left:0;top:0;right:5px;bottom:0;overflow:hidden"><span class="t" style="left:3px;top:17.5px;letter-spacing:-0.566px">9,77 ГБ</span><span class="t" style="left:3px;top:32.5px;letter-spacing:-0.178px">Исправен (Раздел восстановления)</span></div></div>
<div class="a" style="left:238px;top:417px;width:164px;height:13px;background:#000080"></div>
<div class="a" style="left:238px;top:430px;width:165px;height:73px;border:3px solid #c0c0c0;overflow:hidden;background:#fff repeating-linear-gradient(135deg,#fff 0,#fff 4.76px,#b0b0b0 4.76px,#b0b0b0 5.657px)"><span class="t b" style="left:7px;top:4px;padding:0 3px;background:#fff;height:15px;letter-spacing:-0.914px">(C:)</span><span class="t" style="left:2px;top:19px;padding:0 2px 0 1px;background:#fff;height:15px;letter-spacing:-0.450px">111,57 ГБ NTFS</span><span class="t" style="left:2px;top:34px;padding:0 2px 0 1px;background:#fff;height:15px">Исправен (Система, Загрузка, Файл подкачки)</span></div>
<div class="a" style="left:405px;top:417px;width:168px;height:13px;background:#000080"></div>
<div class="pbox" style="left:408px;top:433px;width:165px;height:70px;overflow:hidden"><div class="a" style="left:0;top:0;right:5px;bottom:0;overflow:hidden"><span class="t b" style="left:4px;top:2.5px;letter-spacing:-0.117px">DATA&nbsp; (D:)</span><span class="t" style="left:4px;top:17.5px;letter-spacing:-0.521px">111,55 ГБ NTFS</span><span class="t" style="left:4px;top:32.5px;letter-spacing:-0.124px">Исправен (Основной раздел)</span></div></div>
<div class="a" style="left:0;top:509px;width:101px;height:1px;background:#a0a0a0"></div><div class="a" style="left:0;top:510px;width:101px;height:1px;background:#fff"></div><div class="a" style="left:104px;top:504px;width:473px;height:1px;background:#a8a8a8"></div><div class="a" style="left:104px;top:505px;width:473px;height:3px;background:#f5f5f5"></div><div class="a" style="left:104px;top:508px;width:473px;height:1px;background:#a0a0a0"></div><div class="a" style="left:104px;top:509px;width:473px;height:2px;background:#fff"></div>
<svg class="a" style="left:10px;top:515px;width:16px;height:16px" viewBox="0 0 16 16"><use href="#cdr"/></svg>
<span class="t b" style="left:27.5px;top:519px;letter-spacing:-0.155px">CD-ROM 0</span>
<span class="t" style="left:9.5px;top:534px;letter-spacing:-0.763px">DVD (E:)</span>
<span class="t" style="left:9.5px;top:564px;letter-spacing:-0.152px">Нет носителя</span>
<div class="a" style="left:101px;top:511px;width:2px;height:67px;background:#fff"></div>
<div class="a" style="left:103px;top:509px;width:1px;height:69px;background:#a0a0a0"></div>
<div class="a sb" style="left:578px;top:308px;width:17px;height:270px;background:#f0f0f0"></div>
<div class="a thumb" style="left:578px;top:325px;width:15px;height:177px;border-color:#a3a3a3;background:linear-gradient(90deg,#f5f5f5 0%,#ececec 40%,#dbdbdb 60%,#cecece 100%)"><i class="grip" style="left:3px;top:84px;width:7px;height:1px;box-shadow:0 1px 0 #fff"></i><i class="grip" style="left:3px;top:86px;width:7px;height:1px;box-shadow:0 1px 0 #fff"></i><i class="grip" style="left:3px;top:88px;width:7px;height:1px;box-shadow:0 1px 0 #fff"></i></div>
<svg class="a" style="left:582px;top:314px;width:9px;height:5px" viewBox="0 0 9 5"><path d="M0.5 4.5H8.5L4.5 0.5Z" fill="#404040"/></svg>
<svg class="a" style="left:582px;top:568px;width:9px;height:5px" viewBox="0 0 9 5"><path d="M0.5 0.5H8.5L4.5 4.5Z" fill="#404040"/></svg>
<div class="a" style="left:0;top:577px;width:594px;height:1px;background:#fff"></div><div class="a" style="left:0;top:598px;width:594px;height:1px;background:#909090;z-index:3"></div>
<div class="a" style="left:0;top:578px;width:594px;height:21px;background:#f0f0f0"></div>
<div class="lg" style="left:6px;background:#000"></div>
<span class="t" style="left:22px;top:581px;letter-spacing:-0.263px">Не распределен</span>
<div class="lg" style="left:115.5px;background:#000080"></div>
<span class="t" style="left:131.5px;top:581px;letter-spacing:-0.119px">Основной раздел</span>
<div class="lg" style="left:232.5px;background:#008000"></div>
<span class="t" style="left:248px;top:581px">Дополнительный раздел</span>
<div class="lg" style="left:390.5px;background:#00ff00"></div>
<span class="t" style="left:407px;top:581px;letter-spacing:-0.196px">Свободно</span>
<div class="lg" style="left:466.5px;background:#0000ff"></div>
<span class="t" style="left:482.5px;top:581px;letter-spacing:0.140px">Логический диск</span>
</div>
<div id="act" class="a">
<div class="a" style="left:0;top:0;width:188px;height:19px;background:linear-gradient(180deg,#fbfbfb,#f3f3f3)"></div>
<div class="a" style="left:0;top:19px;width:188px;height:1px;background:#a9a9a9"></div>
<span class="t b" style="left:5px;top:3.5px;letter-spacing:-0.020px">Действия</span>
<div class="a" style="left:0;top:20px;width:188px;height:26px;background:linear-gradient(180deg,#c9d9ec 0%,#b9cfe8 50%,#a6c0df 100%)"></div>
<span class="t" style="left:7px;top:26.5px;letter-spacing:-0.083px">Управление дисками</span>
<svg class="a" style="left:169px;top:30px;width:10px;height:6px" viewBox="0 0 10 6"><path d="M0 6H10L5 0.500Z" fill="#000"/></svg>
<span class="t" style="left:31.5px;top:51px;letter-spacing:-0.222px">Дополнительные дей…</span>
<svg class="a" style="left:172px;top:53px;width:6px;height:10px" viewBox="0 0 6 10"><path d="M0 0V10L5.500 5Z" fill="#000"/></svg>
</div>
<div id="status" class="a"><i class="ssep" style="left:763px"></i><i class="ssep" style="left:896px"></i></div>
<svg class="a" style="left:167px;top:85px;width:18px;height:16px" viewBox="0 0 18 16"><path d="M1 8L8.200 1V5H16.500V11H8.200V15Z" fill="url(#gBack)" stroke="#2f7fd0" stroke-width="1" stroke-linejoin="round"/><path d="M3 8L7.400 3.600V6H15.500" fill="none" stroke="#bfe6fb" stroke-width="1" opacity=".8"/></svg>
<svg class="a" style="left:190px;top:85px;width:18px;height:16px" viewBox="0 0 18 16"><path d="M17 8L9.800 1V5H1.500V11H9.800V15Z" fill="url(#gFwd)" stroke="#6e6e6e" stroke-width="1" stroke-linejoin="round"/></svg>
<i class="tsep" style="left:213px"></i>
<svg class="a" style="left:222px;top:84px;width:16px;height:16px" viewBox="0 0 16 16"><path d="M1.500 4.500H9l1.500-1.300H15V15H1.500Z" fill="url(#gFold)" stroke="#d0a848" stroke-width=".8"/><path d="M3 11C6.500 10 8 7.500 8 4.500H10.300L6.800 0.500 3.800 4.500H5.800C5.800 7 5 9 3 11Z" fill="#4cc238" stroke="#2f9a22" stroke-width=".6"/></svg>
<div class="tbtn" style="left:242px"></div>
<svg class="a" style="left:245px;top:87px;width:17px;height:13px" viewBox="0 0 17 13"><rect x=".5" y=".5" width="16" height="12" fill="#f7f8fa" stroke="#6e727a"/><rect x="1" y="1" width="15" height="2.500" fill="#aeb2bb"/><rect x="11.500" y="1.500" width="1.300" height="1.300" fill="#f4f4f6"/><rect x="13.700" y="1.500" width="1.300" height="1.300" fill="#f4f4f6"/><path d="M1 3.800H16" stroke="#7d818a" stroke-width=".7"/><rect x="1.500" y="4.500" width="4" height="7.500" fill="#fff" stroke="#9aa0aa" stroke-width=".5"/><path d="M2.300 6h2.400M2.300 8h2.400M2.300 10h2.400" stroke="#4a7fc0" stroke-width="1"/><rect x="6.500" y="4.500" width="9.500" height="7.500" fill="#eaf5e4"/><path d="M12.500 5.500V11L9 8.250Z" fill="#4aa836"/></svg>
<i class="tsep" style="left:267px"></i>
<div id="q" class="a">?</div>
<div class="tbtn" style="left:296px"></div>
<svg class="a" style="left:299px;top:87px;width:17px;height:13px" viewBox="0 0 17 13"><rect x=".5" y=".5" width="16" height="12" fill="#f7f8fa" stroke="#6e727a"/><rect x="1" y="1" width="15" height="2.500" fill="#aeb2bb"/><rect x="11.500" y="1.500" width="1.300" height="1.300" fill="#f4f4f6"/><rect x="13.700" y="1.500" width="1.300" height="1.300" fill="#f4f4f6"/><path d="M1 3.800H16" stroke="#7d818a" stroke-width=".7"/><rect x="11.500" y="4.500" width="4" height="7.500" fill="#fff" stroke="#9aa0aa" stroke-width=".5"/><path d="M12.300 6h2.400M12.300 8h2.400M12.300 10h2.400" stroke="#4a7fc0" stroke-width="1"/><rect x="1" y="4.500" width="9.500" height="7.500" fill="#eaf5e4"/><path d="M4.500 5.500V11L8 8.250Z" fill="#4aa836"/></svg>
<i class="tsep" style="left:321px"></i>
<svg class="a" style="left:330px;top:84px;width:15px;height:16px" viewBox="0 0 15 16"><path d="M1 .7H10L14 4.500V15.300H1Z" fill="#fff" stroke="#000" stroke-width="1.200"/><path d="M10 .7V4.500H14" fill="none" stroke="#000" stroke-width="1"/><path d="M10.500 7A3.300 3.300 0 0 0 4.500 6.200" fill="none" stroke="#2ea32a" stroke-width="1.600"/><path d="M3.200 4.500L3.800 8 7 6.500Z" fill="#2ea32a"/><path d="M4.200 10A3.300 3.300 0 0 0 10.300 10.800" fill="none" stroke="#2ea32a" stroke-width="1.600"/><path d="M11.600 12.500L11 9 7.800 10.500Z" fill="#2ea32a"/></svg>
<svg class="a" style="left:352px;top:85px;width:16px;height:15px" viewBox="0 0 16 15"><path d="M1.500 1.500C5 4.500 10 9.500 14.500 13.500M13.500 1.500C9.500 5 4.500 10 1.800 13.800" fill="none" stroke="#000" stroke-width="1.900" stroke-linecap="round"/></svg>
<svg class="a" style="left:375px;top:84px;width:17px;height:16px" viewBox="0 0 17 16"><rect x="1.500" y="4.500" width="10.500" height="10" fill="#fff" stroke="#000" stroke-width="1.300"/><path d="M3 8h7.500M3 10.300h7.500M3 12.600h7.500" stroke="#000" stroke-width="1.300"/><path d="M5 5.500L9 1.500H15V6L11.500 8.500Z" fill="#c8c8c8" stroke="#000" stroke-width="1"/><path d="M15.800 1V7" stroke="#1a2ab0" stroke-width="1.300"/></svg>
<svg class="a" style="left:398px;top:84px;width:17px;height:15px" viewBox="0 0 17 15"><path d="M1.500 13.500V4.500H5.500L6.500 5.800H12V8" fill="#f5ee8a" stroke="#000" stroke-width="1.100"/><path d="M1.500 13.500L5 8H16L12.500 13.500Z" fill="#8f8a28" stroke="#000" stroke-width="1.100"/><path d="M9 3.500C10.500 1.500 13 1.500 14.500 3.500" fill="none" stroke="#000" stroke-width="1.100"/><path d="M15.500 1.500V5H12.500Z" fill="#000"/></svg>
<svg class="a" style="left:421px;top:84px;width:17px;height:16px" viewBox="0 0 17 16"><path d="M1.500 11.500V2.500H5.500L7 4.500H13.500V11.500Z" fill="#e9e08c" stroke="#9a9a9a" stroke-width="1"/><circle cx="7.300" cy="6.800" r="3.800" fill="#7fe3e6" stroke="#000" stroke-width="1.200"/><path d="M10 9.800L15.500 15.200" stroke="#10209a" stroke-width="2"/></svg>
<svg class="a" style="left:444px;top:84px;width:18px;height:16px" viewBox="0 0 18 16"><rect x="1.200" y=".8" width="13" height="12.500" fill="#ececec" stroke="#000" stroke-width="1.200"/><path d="M1 14.500H14.500" stroke="#808080" stroke-width="1"/><rect x="3.200" y="3" width="3.400" height="3" fill="#000"/><rect x="8" y="3.500" width="4.500" height="1.600" fill="#000"/><rect x="3.200" y="8" width="3.400" height="3" fill="#000"/><rect x="8" y="8.500" width="2.500" height="1.600" fill="#000"/><path d="M12 7.500l1.200 1.800 2-.8-.3 2.100 2.100.5-1.600 1.400 1.200 1.800-2.200-.1-.6 2.100-1.600-1.500-1.800 1.200.2-2.200-2-.7 1.800-1.200-.8-2 2.100.6z" fill="#f2e23a" stroke="#8a7a00" stroke-width=".6"/><circle cx="12.300" cy="11.600" r="1.300" fill="#fff" stroke="#000" stroke-width=".6"/></svg>
<div id="tb" class="a"></div>
<div id="tbtn" class="a"></div>
<div id="sd" class="a"></div>
<span class="tray" style="left:1043px;top:771px;letter-spacing:-1.422px">RU</span>
<span class="tray" style="left:1214px;top:765.5px;letter-spacing:-0.588px">11:26</span>
<span class="tray" style="left:1200px;top:782.5px;letter-spacing:-0.647px">11.01.2010</span>
<svg class="a" style="left:163px;top:33px;width:16px;height:16px" viewBox="0 0 16 16"><use href="#i0"/></svg>
<svg class="a" style="left:1053.500px;top:36.500px;width:14px;height:7px" viewBox="0 0 14 7"><rect x="1" y="1.500" width="11" height="3.500" rx=".8" fill="#fff" stroke="#3a4a60" stroke-width="1"/></svg>
<svg class="a" style="left:1081px;top:32px;width:14px;height:11px" viewBox="0 0 14 11"><rect x="1" y="1" width="11" height="8.500" rx=".8" fill="#fff" stroke="#3a4a60" stroke-width="1"/><rect x="3.800" y="3.800" width="5.400" height="3" fill="#7f99b9" stroke="#3a4a60" stroke-width=".9"/></svg>
<svg class="a" style="left:1118.500px;top:31.500px;width:13px;height:10.500px" viewBox="0 0 16 13"><path d="M1.500 1.500H5.500L8 4.500 10.500 1.500H14.500L10 6.500 14.500 11.500H10.500L8 8.500 5.500 11.500H1.500L6 6.500Z" fill="#fff" stroke="#5a2a2a" stroke-width="1" stroke-linejoin="round"/></svg>
<svg class="a" style="left:7px;top:761px;width:40px;height:39px" viewBox="0 0 40 39"><circle cx="20" cy="19.500" r="18.300" fill="url(#gOrb)" stroke="#9fc4e6" stroke-width="1.200" stroke-opacity=".85"/><path d="M3.500 16C6 5 34 5 36.500 16 30 21 10 21 3.500 16z" fill="url(#gOrbHi)" opacity=".7"/><g transform="translate(19.500 20) scale(1.320) translate(-18.700 -20)"><path d="M11.500 12.500c2.500-1.500 5-1.500 7.500 0l-1.800 6.500c-2.500-1.500-5-1.500-7.500 0z" fill="#f25a1f"/><path d="M20.500 13c2.500 1.500 5 1.500 7.500 0l-1.800 6.500c-2.500 1.500-5 1.500-7.500 0z" fill="#7cc23a"/><path d="M9.300 20.500c2.500-1.500 5-1.500 7.500 0L15 27c-2.500-1.500-5-1.500-7.500 0z" fill="#2f9ae8"/><path d="M18.300 21c2.500 1.500 5 1.500 7.500 0L24 27.500c-2.500 1.500-5 1.500-7.500 0z" fill="#fbc21f"/></g></svg>
<svg class="a" style="left:72px;top:763px;width:36px;height:36px" viewBox="0 0 36 36"><circle cx="19" cy="18" r="12.500" fill="url(#gIE)" stroke="#0f4a9a" stroke-width=".8"/><text x="10.500" y="27.500" font-family="Liberation Sans,sans-serif" font-weight="bold" font-size="27" fill="#dff2fd" stroke="#0f4fa8" stroke-width=".5">e</text><path d="M33 5C28 -1 8 12 3 27c-2 6 3 7 9 3" fill="none" stroke="#f4c22a" stroke-width="2.600" stroke-linecap="round"/></svg>
<svg class="a" style="left:134px;top:765px;width:34px;height:32px" viewBox="0 0 34 32"><path d="M2 3h12l2 3h16v22H2z" fill="#f3d98c" stroke="#c9a64a" stroke-width=".8"/><rect x="4" y="2" width="4" height="2.500" fill="#3fae3a"/><rect x="12" y="4" width="4" height="2.500" fill="#d8482a"/><rect x="20" y="6" width="4" height="2.500" fill="#2f7fd8"/><path d="M2 9h30v19H2z" fill="#fbe9a8" stroke="#d4b25a" stroke-width=".8"/><path d="M5 18h24v13H5z" fill="#bfe0f5" stroke="#8fc0e4" stroke-width="1"/><path d="M9 22h16v9H9z" fill="#f6dc8a"/></svg>
<svg class="a" style="left:196px;top:766px;width:30px;height:30px" viewBox="0 0 30 30"><rect x="3" y="2" width="24" height="26" rx="2" fill="#a9cdea" stroke="#d8ecfa" stroke-width="1"/><rect x="22" y="4" width="5" height="24" fill="#d9ebf7" opacity=".7"/><circle cx="14" cy="15" r="10" fill="url(#gWmp)" stroke="#fff" stroke-width="1.200"/><path d="M11 9.500L20 15 11 20.500z" fill="#fff"/></svg>
<svg class="a" style="left:257px;top:763px;width:36px;height:36px" viewBox="0 0 36 36"><rect x="3" y="10" width="9" height="14" fill="#c9ced4" stroke="#8a9198" stroke-width=".8"/><path d="M11 4L33 6.500 31.500 25 10 22z" fill="url(#gSil)" stroke="#8f969e" stroke-width=".8"/><path d="M13 6.500L31 8.500 29.800 22.500 12.200 20z" fill="url(#gScr2)"/><path d="M12 20c0-3 3-5 6-5s6 2 6 5" fill="none" stroke="#50585f" stroke-width="2"/><rect x="4" y="20" width="28" height="14" rx="1.500" fill="#aeb7be" stroke="#6a737a" stroke-width="1"/><rect x="4.500" y="20.500" width="27" height="3" fill="#cfd6db"/><rect x="4" y="24.500" width="28" height="1.600" fill="#6a737a"/><rect x="9" y="23.500" width="3.500" height="4.500" fill="#dfe3e6"/><rect x="23.500" y="23.500" width="3.500" height="4.500" fill="#dfe3e6"/></svg>
<svg class="a" style="left:1073px;top:777px;width:9px;height:6px" viewBox="0 0 9 6"><path d="M0 5.500H8L4 1Z" fill="#fff"/></svg>
<svg class="a" style="left:1093px;top:772px;width:18px;height:18px" viewBox="0 0 18 18"><path d="M2.500 2V16" stroke="#fff" stroke-width="1.600"/><path d="M3.500 3c3-2 5 1.500 8.500 0v6.500c-3.500 1.500-5.500-2-8.500 0z" fill="#fff"/><circle cx="11.500" cy="12.500" r="4.300" fill="#e0262a" stroke="#fff" stroke-width=".8"/><path d="M9.700 10.700l3.600 3.600M13.300 10.700l-3.600 3.600" stroke="#fff" stroke-width="1.400"/></svg>
<svg class="a" style="left:1117px;top:772px;width:18px;height:18px" viewBox="0 0 18 18"><rect x="2" y="4" width="8" height="11" rx="1" fill="none" stroke="#fff" stroke-width="1.500"/><rect x="4.500" y="2.500" width="3" height="1.800" fill="#fff"/><path d="M9 1.500v3M13 1.500v3" stroke="#fff" stroke-width="1.400"/><path d="M7.500 4.500h7v3.500c0 2-1.500 3.500-3.500 3.500S7.500 10 7.500 8z" fill="#fff"/><path d="M11 11.500V16" stroke="#fff" stroke-width="1.600"/></svg>
<svg class="a" style="left:1140px;top:772px;width:20px;height:18px" viewBox="0 0 20 18"><rect x="7" y="5" width="11" height="8" fill="#1f3f6a" stroke="#fff" stroke-width="1.500"/><path d="M9 16h7M12.500 13v3" stroke="#fff" stroke-width="1.500"/><path d="M2.500 1v3M5.500 1v3" stroke="#fff" stroke-width="1.200"/><rect x="1.500" y="3.500" width="5" height="4" fill="#fff"/><path d="M4 7.500V14H7" stroke="#fff" stroke-width="1.300" fill="none"/></svg>
<svg class="a" style="left:1165px;top:772px;width:18px;height:18px" viewBox="0 0 18 18"><path d="M1.500 6.500H4.500L8.500 2.500V15.500L4.500 11.500H1.500Z" fill="#fff"/><path d="M10.500 6.500c1 1.500 1 3.500 0 5M12.500 4.500c2 2.500 2 6.500 0 9" stroke="#fff" stroke-width="1.100" fill="none" opacity=".9"/></svg>
</body>
</html>
